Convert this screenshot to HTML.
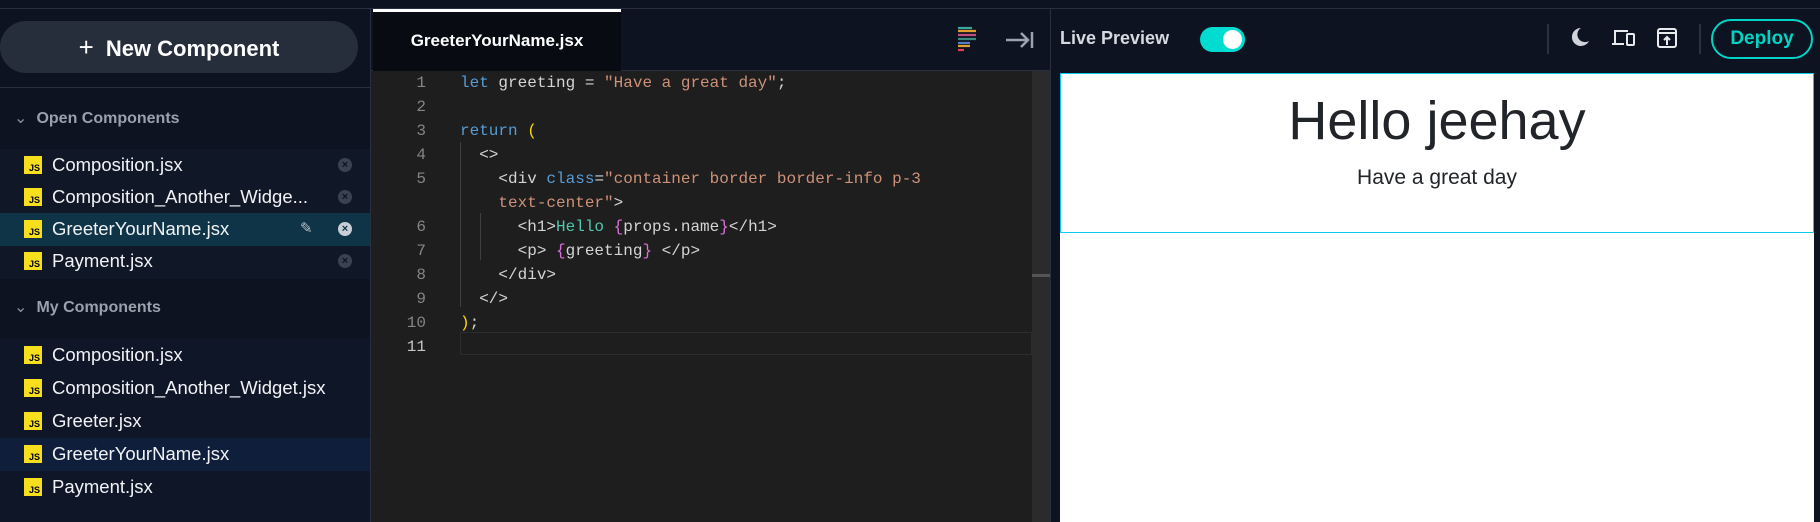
<!DOCTYPE html>
<html><head><meta charset="utf-8"><style>
*{margin:0;padding:0;box-sizing:border-box}
body{width:1820px;height:522px;overflow:hidden;background:#0d1320;font-family:"Liberation Sans",sans-serif;position:relative}
.a{position:absolute}
.top{left:0;top:0;width:1820px;height:9px;background:#0d1320;border-bottom:1px solid #283040}
.side{left:0;top:9px;width:371px;height:513px;background:#0d1320}
.btn{left:0;top:21px;width:358px;height:52px;background:#262d3b;border-radius:26px;color:#fff;font-weight:bold;font-size:22px;text-align:center;line-height:52px}
.sep{left:0;top:87px;width:371px;height:1px;background:#283040}
.sec{left:14px;color:#9aa1ad;font-weight:bold;font-size:16px}
.sec span{display:inline-block;width:18px;color:#8a919c;font-weight:normal}
.item{left:0;width:371px;height:32px;color:#f0f2f5;font-size:18.5px;line-height:32px;padding-left:52px;white-space:nowrap}
.js{position:absolute;left:24px;top:7px;width:18px;height:18px;background:#f7df1e;color:#000;font-size:9px;font-weight:bold;line-height:24px;text-align:right;padding-right:2px;font-style:normal}
.x{position:absolute;left:338px;top:9px;width:14px;height:14px;border-radius:50%;background:#3a4150;color:#0d1320;font-size:11px;line-height:14px;text-align:center;font-weight:bold}
.ed{left:371px;top:9px;width:679px;height:513px;background:#1e1e1e}
.tabbar{left:371px;top:9px;width:679px;height:62px;background:#0d1320;border-bottom:1px solid #283040}
.tab{left:373px;top:9px;width:248px;height:62px;background:#080b12;border-top:3px solid #fff;color:#fff;font-weight:bold;font-size:17px;text-align:center;line-height:58px}
.code{left:371px;top:71px;font-family:"Liberation Mono",monospace;font-size:16px;color:#d4d4d4}
.ln{position:absolute;left:0;width:55px;text-align:right;color:#858585;height:24px;line-height:24px}
.cl{position:absolute;left:89px;height:24px;line-height:24px;white-space:pre}
.k{color:#569cd6}.s{color:#ce9178}.t{color:#4ec9b0}.p{color:#da70d6}.y{color:#ffd700}
.pv{left:1050px;top:9px;width:770px;height:513px;background:#0d1320;border-left:1px solid #283040}
</style></head><body>
<div class="a top"></div>
<div class="a side"></div>
<div class="a" style="left:370px;top:9px;width:1px;height:513px;background:#283040"></div>
<div class="a btn"><span style="font-weight:normal;font-size:26px;margin-right:12px">+</span>New Component</div>
<div class="a sep"></div>
<div class="a sec" style="top:108px"><span>⌄</span> Open Components</div>
<div class="a" style="left:0;top:149px;width:370px;height:130px;background:#101727"></div>
<div class="a item" style="top:149px"><i class="js">JS</i>Composition.jsx<b class="x">×</b></div>
<div class="a item" style="top:181px"><i class="js">JS</i>Composition_Another_Widge...<b class="x">×</b></div>
<div class="a item" style="top:213px;background:#0f3447;height:33px;width:370px"><i class="js">JS</i>GreeterYourName.jsx<span style="position:absolute;left:300px;color:#b8bec8;font-size:15px">✎</span><b class="x" style="background:#c8ced6;color:#0f3447">×</b></div>
<div class="a item" style="top:245px"><i class="js">JS</i>Payment.jsx<b class="x">×</b></div>
<div class="a sec" style="top:297px"><span>⌄</span> My Components</div>
<div class="a" style="left:0;top:338px;width:370px;height:184px;background:#0f1628"></div>
<div class="a item" style="top:339px;height:33px"><i class="js">JS</i>Composition.jsx</div>
<div class="a item" style="top:372px;height:33px"><i class="js">JS</i>Composition_Another_Widget.jsx</div>
<div class="a item" style="top:405px;height:33px"><i class="js">JS</i>Greeter.jsx</div>
<div class="a item" style="top:438px;height:33px;width:370px;background:#0f1f3b"><i class="js">JS</i>GreeterYourName.jsx</div>
<div class="a item" style="top:471px;height:33px"><i class="js">JS</i>Payment.jsx</div>

<div class="a ed"></div>
<div class="a tabbar"></div>
<div class="a tab">GreeterYourName.jsx</div>
<svg class="a" style="left:956px;top:26px" width="22" height="26"><g stroke-width="2.2"><line x1="2" y1="2" x2="16" y2="2" stroke="#3aa6a0"/><line x1="2" y1="5" x2="20" y2="5" stroke="#e0a030"/><line x1="2" y1="9" x2="20" y2="9" stroke="#c05080"/><line x1="2" y1="13" x2="20" y2="13" stroke="#3a8a80"/><line x1="2" y1="17" x2="14" y2="17" stroke="#5080c0"/><line x1="2" y1="20" x2="14" y2="20" stroke="#e0a030"/><line x1="2" y1="24" x2="8" y2="24" stroke="#e04050"/></g></svg>
<svg class="a" style="left:1005px;top:30px" width="30" height="20"><path d="M1 10H23M16 3L23 10L16 17M27 2V18" stroke="#9aa3b0" stroke-width="2.5" fill="none"/></svg>
<div class="a" style="left:1032px;top:71px;width:18px;height:451px;background:#2b2b2b"></div>
<div class="a" style="left:1032px;top:274px;width:18px;height:3px;background:#555"></div>
<div class="a" style="left:460px;top:332px;width:572px;height:23px;border:1px solid #2c2c2c"></div>
<div class="a" style="left:460px;top:142px;width:1px;height:165px;background:#404040"></div>
<div class="a" style="left:480px;top:213px;width:1px;height:47px;background:#404040"></div>
<div class="a code">
<div class="ln" style="top:0">1</div><div class="cl" style="top:0"><span class="k">let</span> greeting = <span class="s">"Have a great day"</span>;</div>
<div class="ln" style="top:24px">2</div>
<div class="ln" style="top:48px">3</div><div class="cl" style="top:48px"><span class="k">return</span> <span class="y">(</span></div>
<div class="ln" style="top:72px">4</div><div class="cl" style="top:72px">  &lt;&gt;</div>
<div class="ln" style="top:96px">5</div><div class="cl" style="top:96px">    &lt;div <span class="k">class</span>=<span class="s">"container border border-info p-3</span></div>
<div class="cl" style="top:120px"><span class="s">    text-center"</span>&gt;</div>
<div class="ln" style="top:144px">6</div><div class="cl" style="top:144px">      &lt;h1&gt;<span class="t">Hello </span><span class="p">{</span>props.name<span class="p">}</span>&lt;/h1&gt;</div>
<div class="ln" style="top:168px">7</div><div class="cl" style="top:168px">      &lt;p&gt; <span class="p">{</span>greeting<span class="p">}</span> &lt;/p&gt;</div>
<div class="ln" style="top:192px">8</div><div class="cl" style="top:192px">    &lt;/div&gt;</div>
<div class="ln" style="top:216px">9</div><div class="cl" style="top:216px">  &lt;/&gt;</div>
<div class="ln" style="top:240px">10</div><div class="cl" style="top:240px"><span class="y">)</span>;</div>
<div class="ln" style="top:264px;color:#c6c6c6">11</div>
</div>

<div class="a pv"></div>
<div class="a" style="left:1060px;top:28px;color:#d5d9e0;font-weight:bold;font-size:18px">Live Preview</div>
<div class="a" style="left:1200px;top:27px;width:45px;height:25px;border-radius:13px;background:#00ddd0"><div class="a" style="left:23px;top:3px;width:19px;height:19px;border-radius:50%;background:#fff"></div></div>
<div class="a" style="left:1547px;top:24px;width:2px;height:30px;background:#2a3140"></div>
<svg class="a" style="left:1569px;top:26px" width="22" height="22"><path d="M12 2A9 9 0 1 0 20 15A7 7 0 0 1 12 2Z" fill="#d0d3da"/></svg>
<svg class="a" style="left:1611px;top:28px" width="26" height="20"><path d="M4 15V3H17M1 16H13" stroke="#e8eaee" stroke-width="2" fill="none"/><rect x="16" y="6" width="7" height="11" rx="1" stroke="#e8eaee" stroke-width="2" fill="none"/></svg>
<svg class="a" style="left:1656px;top:27px" width="22" height="22"><rect x="2" y="2" width="18" height="18" rx="2" stroke="#e8eaee" stroke-width="2" fill="none"/><line x1="2" y1="6" x2="20" y2="6" stroke="#e8eaee" stroke-width="2"/><path d="M11 18V10M8 13L11 10L14 13" stroke="#e8eaee" stroke-width="2" fill="none"/></svg>
<div class="a" style="left:1699px;top:24px;width:2px;height:30px;background:#2a3140"></div>
<div class="a" style="left:1711px;top:19px;width:102px;height:40px;border:2px solid #00d4c4;border-radius:20px;color:#00d4c4;font-weight:bold;font-size:19px;text-align:center;line-height:36px">Deploy</div>
<div class="a" style="left:1060px;top:73px;width:754px;height:449px;background:#fff"></div>
<div class="a" style="left:1060px;top:73px;width:754px;height:160px;border:1px solid #0dcaf0"></div>
<div class="a" style="left:1060px;top:88px;width:754px;text-align:center;color:#212529;font-size:54px;line-height:66px">Hello jeehay</div>
<div class="a" style="left:1060px;top:165px;width:754px;text-align:center;color:#212529;font-size:21px;line-height:26px">Have a great day</div>
</body></html>
